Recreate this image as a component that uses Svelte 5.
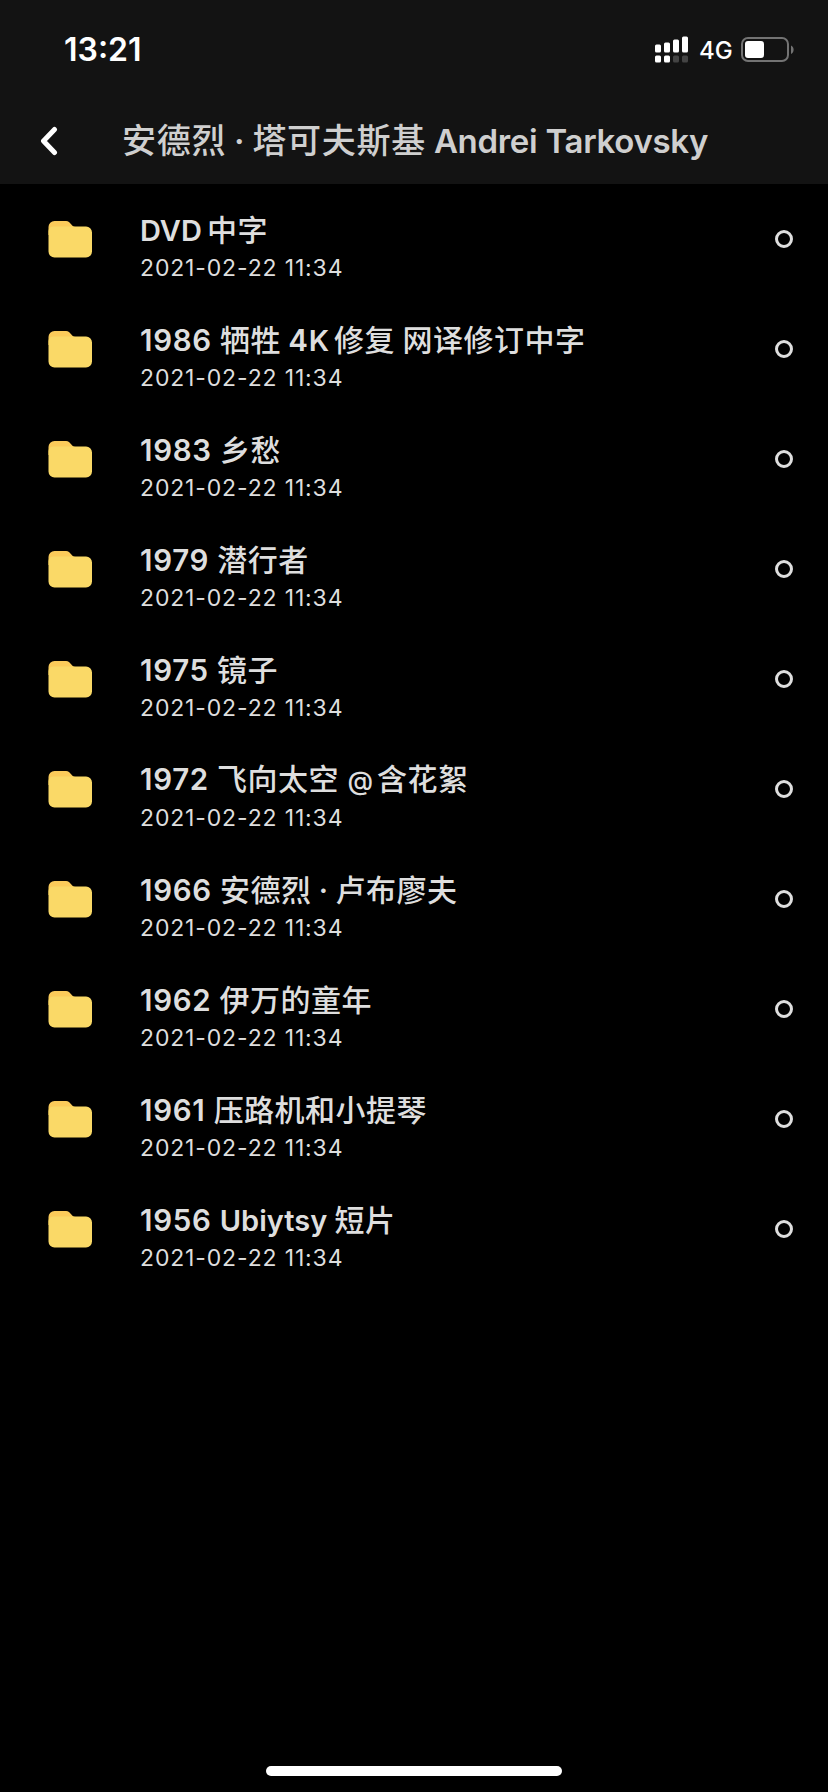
<script lang="ts">
	interface Folder {
		name: string;
		modified: string;
	}

	interface Run {
		text: string;
		kind: string;
	}

	const title = '安德烈 · 塔可夫斯基 Andrei Tarkovsky';
	const modified = '2021-02-22 11:34';

	const folders: Folder[] = [
		{ name: 'DVD中字', modified },
		{ name: '1986 牺牲 4K修复 网译修订中字', modified },
		{ name: '1983 乡愁', modified },
		{ name: '1979 潜行者', modified },
		{ name: '1975 镜子', modified },
		{ name: '1972 飞向太空 @含花絮', modified },
		{ name: '1966 安德烈 · 卢布廖夫', modified },
		{ name: '1962 伊万的童年', modified },
		{ name: '1961 压路机和小提琴', modified },
		{ name: '1956 Ubiytsy 短片', modified }
	];

	const signal = [8, 10, 13, 16];

	function kindOf(text: string) {
		if (/[\u4e00-\u9fff]/.test(text)) return 'cjk';
		if (/\d/.test(text)) return 'digits';
		if (text === '@') return 'symbol';
		return 'latin';
	}

	// Each script gets its own weight and tracking
	function split(text: string): Run[] {
		const parts = text.match(/[\u4e00-\u9fff]+|\d+ ?|@|[^\u4e00-\u9fff\d@]+/g) ?? [];
		return parts.map((part) => ({ text: part, kind: kindOf(part) }));
	}

	// Latin text set directly against Chinese needs a small gap
	function isTight(runs: Run[], i: number) {
		return runs[i].kind === 'latin' && runs[i + 1]?.kind === 'cjk' && !runs[i].text.endsWith(' ');
	}
</script>

{#snippet mixed(text: string)}
	{@const runs = split(text)}
	{#each runs as run, i}<span class={run.kind} class:tight={isTight(runs, i)}>{run.text}</span>{/each}
{/snippet}

<div class="screen">
	<header class="top">
		<div class="status-bar">
			<span class="time">13:21</span>
			<div class="status-icons">
				<svg class="signal" width="34" height="27" viewBox="0 0 34 27" fill="#fff">
					{#each signal as h, i}
						<rect x={i * 9} y={16.5 - h} width="6" height={h} rx="1.5" />
						<rect x={i * 9} y="19.5" width="6" height="7" rx="1.5" fill={i < 2 ? '#fff' : '#444'} />
					{/each}
				</svg>
				<span class="network">4G</span>
				<svg class="battery" width="54" height="26" viewBox="0 0 54 26">
					<rect x="1" y="1" width="46" height="23" rx="6" fill="none" stroke="#737373" stroke-width="2" />
					<rect x="4" y="4" width="19" height="17" rx="3" fill="#fff" />
					<path d="M50 8.5c3.5 1.5 3.5 7 0 8.5z" fill="#737373" />
				</svg>
			</div>
		</div>
		<div class="nav">
			<button class="back" aria-label="Back">
				<svg width="20" height="30" viewBox="0 0 20 30" fill="none" stroke="#fff" stroke-width="5">
					<path d="M15.500 3.500 4.500 15l11 11.500" stroke-linecap="round" stroke-linejoin="round" />
				</svg>
			</button>
			<h1>{@render mixed(title)}</h1>
		</div>
	</header>

	<ul class="folders">
		{#each folders as folder}
			<li class="folder">
				<svg class="folder-icon" width="44" height="37" viewBox="0 0 44 37">
					<path d="M.5 6a6 6 0 0 1 6-6H18c5 0 5 6 9.500 6v8H.5z" fill="#fbcb5a" />
					<path d="M.5 10a5 5 0 0 1 5-4.500H38a6 6 0 0 1 6 6v19a6 6 0 0 1-6 6H6.500a6 6 0 0 1-6-6z" fill="#fad967" />
				</svg>
				<div class="info">
					<div class="name">{@render mixed(folder.name)}</div>
					<div class="date">{folder.modified}</div>
				</div>
				<span class="radio"></span>
			</li>
		{/each}
	</ul>

	<div class="home-indicator"></div>
</div>

<style>
	:global(body) {
		background: #000;
	}

	.screen {
		display: flex;
		flex-direction: column;
		height: 1792px;
		background: #000;
		color: #dedede;
		font-family: Inter, 'Noto Sans CJK SC', sans-serif;
		overflow: hidden;
	}

	.top {
		height: 184px;
		background: #131313;
		flex-shrink: 0;
	}

	.status-bar {
		display: flex;
		justify-content: space-between;
		align-items: center;
		height: 99px;
		padding: 0 33px 0 64px;
		box-sizing: border-box;
		color: #fff;
	}

	.time {
		padding-top: 1px;
		font-size: 32px;
		font-weight: 600;
		line-height: 40px;
	}

	.status-icons {
		display: flex;
		align-items: center;
	}

	.network {
		width: 34px;
		margin: 2px 8px 0 10px;
		font-size: 24px;
		font-weight: 500;
		line-height: 30px;
		white-space: nowrap;
	}

	.nav {
		display: flex;
		align-items: center;
		height: 83px;
	}

	.back {
		display: flex;
		margin-left: 39px;
		padding: 0;
		border: 0;
		background: none;
	}

	h1 {
		margin: 0 0 0 63px;
		color: #cfcfcf;
		font-size: 33px;
		font-weight: 600;
		line-height: 48px;
		letter-spacing: -0.3px;
		white-space: nowrap;
	}

	h1 .cjk {
		font-size: 34px;
		letter-spacing: 0.7px;
	}

	.cjk {
		font-weight: 500;
	}

	.folders {
		flex: 1;
		margin: 0;
		padding: 0;
		list-style: none;
	}

	.folder {
		display: flex;
		align-items: center;
		height: 110px;
		padding: 0 35px 0 48px;
		box-sizing: border-box;
	}

	.info {
		flex: 1;
		margin-left: 48px;
		padding-top: 18px;
	}

	.name {
		font-size: 29px;
		font-weight: 600;
		line-height: 38px;
		white-space: nowrap;
	}

	.name .cjk {
		font-size: 30px;
		letter-spacing: 0.5px;
	}

	.name .digits {
		font-size: 29.5px;
		letter-spacing: 0.7px;
	}

	.name .symbol {
		margin: 0 4px 0 1px;
		font-size: 26px;
		font-weight: 500;
	}

	.name .tight {
		margin-right: 5px;
	}

	.date {
		font-size: 23px;
		line-height: 36px;
		letter-spacing: 0.85px;
		white-space: nowrap;
	}

	.radio {
		width: 18px;
		height: 18px;
		border: 3px solid #dedede;
		border-radius: 50%;
		box-sizing: border-box;
	}

	.home-indicator {
		width: 296px;
		height: 10px;
		margin: 0 auto 16px;
		border-radius: 5px;
		background: #fff;
	}
</style>
